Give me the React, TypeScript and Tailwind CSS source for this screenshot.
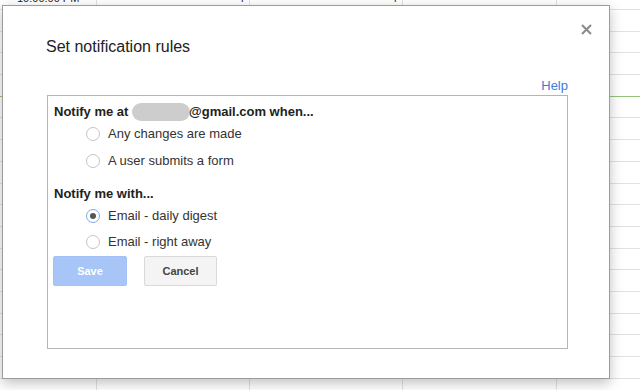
const ROWS = 19

function Radio({ checked }: { checked?: boolean }) {
    return (
        <span
            className={`grid h-[14px] w-[14px] shrink-0 place-items-center rounded-full border bg-white ${
                checked ? 'border-[#7fa6ea]' : 'border-[#c4c4c4]'
            }`}
        >
            {checked && <span className="h-[6px] w-[6px] rounded-full bg-[#555]" />}
        </span>
    )
}

function Option({ label, checked, h }: { label: string; checked?: boolean; h: string }) {
    return (
        <label className={`ml-[32px] flex items-center gap-[8px] text-[13px] text-[#333] ${h}`}>
            <Radio checked={checked} />
            <span>{label}</span>
        </label>
    )
}

// spreadsheet behind the dialog
function Sheet() {
    return (
        <div className="-mt-[11.7px] flex flex-col">
            {Array.from({ length: ROWS }).map((_, i) => (
                <div
                    key={i}
                    className={`grid h-[21.7px] shrink-0 grid-cols-[97px_153px_153px_154px_1fr] border-b text-[11px] text-[#222] ${
                        i === 4 ? 'border-[#93c47d]' : 'border-[#e2e2e2]'
                    }`}
                >
                    <div className="flex items-end border-r border-[#e2e2e2] pb-[3px] pl-[17px]">
                        {i === 0 ? '10:00:00 PM' : ''}
                    </div>
                    <div className="flex items-end justify-end border-r border-[#e2e2e2] pb-[3px] pr-[5px]">
                        {i === 0 ? '4' : ''}
                    </div>
                    <div className="flex items-end justify-end border-r border-[#e2e2e2] pb-[3px] pr-[5px]">
                        {i === 0 ? '4' : ''}
                    </div>
                    <div className="border-r border-[#e2e2e2]" />
                    <div />
                </div>
            ))}
        </div>
    )
}

export default function App() {
    return (
        <div className="relative h-[390px] w-[640px] overflow-hidden bg-white font-['Liberation_Sans',Arial,sans-serif]">
            <Sheet />

            <div className="absolute left-[2px] top-[5px] h-[374px] w-[608px] border border-[#9c9c9c] bg-white shadow-[0_4px_12px_rgba(0,0,0,0.25)]">
                <button
                    type="button"
                    aria-label="Close"
                    className="absolute right-[17px] top-[18px] h-[11px] w-[11px] text-[#8a8a8a]"
                >
                    <svg viewBox="0 0 11 11" className="h-[11px] w-[11px]" stroke="currentColor" strokeWidth="2">
                        <path d="M1 1l9 9M10 1l-9 9" />
                    </svg>
                </button>

                <div className="pl-[43px] pt-[31px]">
                    <h2 className="h-[20px] text-[16px] leading-[20px] text-[#222]">Set notification rules</h2>
                </div>

                <div className="mr-[41px] mt-[20px] flex justify-end">
                    <a className="text-[13px] leading-[18px] text-[#3f7ad9]">Help</a>
                </div>

                <div className="ml-[44px] h-[254px] w-[521px] border border-[#b5b5b5] pl-[6px] pt-[6px]">
                    <div className="flex h-[20px] items-center text-[13px] font-bold text-[#222]">
                        <span>Notify me at&nbsp;</span>
                        <span className="h-[18px] w-[58px] rounded-[9px] bg-[#cdcdcd]" />
                        <span className="-ml-[1px]">@gmail.com when...</span>
                    </div>
                    <Option label="Any changes are made" h="h-[24px]" />
                    <Option label="A user submits a form" h="h-[30px]" />

                    <div className="mt-[8px] flex h-[20px] items-center text-[13px] font-bold text-[#222]">
                        Notify me with...
                    </div>
                    <Option label="Email - daily digest" checked h="h-[24px]" />
                    <Option label="Email - right away" h="h-[28px]" />

                    <div className="-ml-px flex gap-[17px]">
                        <button
                            type="button"
                            disabled
                            className="h-[30px] w-[74px] rounded-[2px] border border-[#a3c1f5] bg-[#a7c5f6] text-[11px] font-bold text-white"
                        >
                            Save
                        </button>
                        <button
                            type="button"
                            className="h-[30px] w-[73px] rounded-[2px] border border-[#d9d9d9] bg-[#f4f4f4] text-[11px] font-bold text-[#444]"
                        >
                            Cancel
                        </button>
                    </div>
                </div>
            </div>
        </div>
    )
}
